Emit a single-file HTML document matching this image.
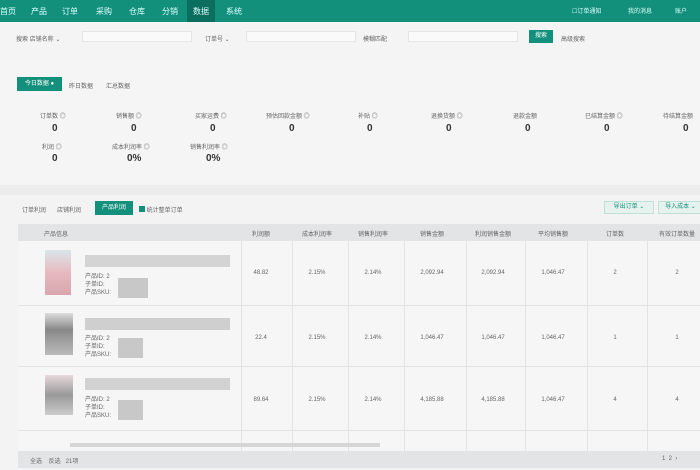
<!DOCTYPE html><html><head><meta charset="utf-8"><style>
*{margin:0;padding:0;box-sizing:border-box}
body{width:700px;height:470px;overflow:hidden;background:#ececec;font-family:"Liberation Sans","Noto Sans CJK SC",sans-serif;font-size:7px;color:#555;position:relative}
.a{position:absolute}
.nav{left:0;top:0;width:700px;height:22px;background:#13907c}
.nav span{position:absolute;top:6px;color:#dff;font-size:8px}
.t{color:#666;font-size:6px}
.v{font-size:10px;color:#333;font-weight:bold}
.cl{position:absolute;top:224px;width:1px;height:228px;background:#e3e3e3}
.cell{position:absolute;font-size:6px;color:#666;width:50px;text-align:center}
.blk{position:absolute;background:#bbb}
</style></head><body>
<div class="a nav"></div>
<div class="a" style="left:187px;top:0;width:28px;height:22px;background:#0c6e5e"></div>
<div class="a nav" style="background:none">
<span style="left:0">首页</span><span style="left:31px">产品</span><span style="left:62px">订单</span><span style="left:96px">采购</span><span style="left:129px">仓库</span><span style="left:162px">分销</span><span style="left:193px">数据</span><span style="left:226px">系统</span>
<span style="left:572px;font-size:6px">☐订单通知</span><span style="left:628px;font-size:6px">我的消息</span><span style="left:675px;font-size:6px">账户</span></div>
<div class="a" style="left:0;top:22px;width:700px;height:40px;background:#f4f4f4"></div>
<div class="a t" style="left:16px;top:34px">搜索 店铺名称 ⌄</div>
<div class="a" style="left:82px;top:31px;width:110px;height:11px;background:#fafafa;border:1px solid #e6e6e6"></div>
<div class="a t" style="left:205px;top:34px">订单号 ⌄</div>
<div class="a" style="left:246px;top:31px;width:110px;height:11px;background:#fafafa;border:1px solid #e6e6e6"></div>
<div class="a t" style="left:363px;top:34px">模糊匹配</div>
<div class="a" style="left:408px;top:31px;width:110px;height:11px;background:#fafafa;border:1px solid #e6e6e6"></div>
<div class="a" style="left:529px;top:30px;width:24px;height:13px;background:#13907c;color:#fff;font-size:6px;text-align:center;line-height:13px">搜索</div>
<div class="a t" style="left:561px;top:34px">高级搜索</div>
<div class="a" style="left:0;top:62px;width:700px;height:123px;background:#f5f5f5"></div>
<div class="a" style="left:17px;top:77px;width:45px;height:14px;background:#13907c;color:#fff;font-size:6px;line-height:14px;text-align:center">今日数据 ●</div>
<div class="a t" style="left:69px;top:81px">昨日数据</div><div class="a t" style="left:106px;top:81px">汇总数据</div>
<div class="a t" style="left:40px;top:111px">订单数 ◎</div><div class="a v" style="left:52px;top:123px">0</div>
<div class="a t" style="left:116px;top:111px">销售额 ◎</div><div class="a v" style="left:131px;top:123px">0</div>
<div class="a t" style="left:195px;top:111px">买家运费 ◎</div><div class="a v" style="left:210px;top:123px">0</div>
<div class="a t" style="left:266px;top:111px">预估回款金额 ◎</div><div class="a v" style="left:289px;top:123px">0</div>
<div class="a t" style="left:358px;top:111px">补贴 ◎</div><div class="a v" style="left:367px;top:123px">0</div>
<div class="a t" style="left:431px;top:111px">退换货额 ◎</div><div class="a v" style="left:446px;top:123px">0</div>
<div class="a t" style="left:513px;top:111px">退款金额</div><div class="a v" style="left:525px;top:123px">0</div>
<div class="a t" style="left:585px;top:111px">已结算金额 ◎</div><div class="a v" style="left:604px;top:123px">0</div>
<div class="a t" style="left:663px;top:111px">待结算金额</div><div class="a v" style="left:683px;top:123px">0</div>
<div class="a t" style="left:42px;top:142px">利润 ◎</div><div class="a v" style="left:52px;top:153px">0</div>
<div class="a t" style="left:112px;top:142px">成本利润率 ◎</div><div class="a v" style="left:127px;top:153px">0%</div>
<div class="a t" style="left:190px;top:142px">销售利润率 ◎</div><div class="a v" style="left:206px;top:153px">0%</div>
<div class="a" style="left:0;top:195px;width:700px;height:275px;background:#f3f3f3"></div>
<div class="a t" style="left:22px;top:205px">订单利润</div><div class="a t" style="left:57px;top:205px">店铺利润</div>
<div class="a" style="left:95px;top:201px;width:38px;height:14px;background:#13907c;color:#fff;font-size:6px;line-height:14px;text-align:center">产品利润</div>
<div class="a t" style="left:139px;top:205px"><span style="display:inline-block;width:6px;height:6px;background:#13907c"></span> 统计整单订单</div>
<div class="a" style="left:604px;top:201px;width:50px;height:13px;border:1px solid #bfe0d6;background:#e6f2ee;color:#13907c;font-size:6px;line-height:11px;text-align:center">导出订单 ⌄</div>
<div class="a" style="left:658px;top:201px;width:45px;height:13px;border:1px solid #bfe0d6;background:#e6f2ee;color:#13907c;font-size:6px;line-height:11px;text-align:center">导入成本 ⌄</div>
<div class="a" style="left:18px;top:224px;width:682px;height:17px;background:#e2e4e6"></div>
<div class="a t" style="left:44px;top:229px">产品信息</div>
<div class="cell" style="left:236px;top:229px">利润额</div><div class="cell" style="left:292px;top:229px">成本利润率</div><div class="cell" style="left:348px;top:229px">销售利润率</div><div class="cell" style="left:407px;top:229px">销售金额</div><div class="cell" style="left:468px;top:229px">利润销售金额</div><div class="cell" style="left:528px;top:229px">平均销售额</div><div class="cell" style="left:590px;top:229px">订单数</div><div class="cell" style="left:652px;top:229px">有效订单数量</div>
<div class="a" style="left:18px;top:241px;width:682px;height:211px;background:#f6f6f6"></div>
<div class="cl" style="left:241px"></div><div class="cl" style="left:292px"></div><div class="cl" style="left:348px"></div><div class="cl" style="left:404px"></div><div class="cl" style="left:466px"></div><div class="cl" style="left:525px"></div><div class="cl" style="left:587px"></div><div class="cl" style="left:647px"></div>
<div class="a" style="left:18px;top:305px;width:682px;height:1px;background:#e3e3e3"></div>
<div class="a" style="left:18px;top:366px;width:682px;height:1px;background:#e3e3e3"></div>
<div class="a" style="left:18px;top:430px;width:682px;height:1px;background:#e3e3e3"></div>
<div class="blk" style="left:45px;top:250px;width:26px;height:45px;background:linear-gradient(#d9e6ea,#e7b9bf 50%,#d9a6ae)"></div>
<div class="blk" style="left:45px;top:313px;width:28px;height:42px;background:linear-gradient(#ddd,#888 40%,#bbb)"></div>
<div class="blk" style="left:45px;top:375px;width:28px;height:40px;background:linear-gradient(#e8d8dc,#999 50%,#ccc)"></div>
<div class="blk" style="left:85px;top:255px;width:145px;height:12px;background:#d4d4d4"></div>
<div class="blk" style="left:85px;top:318px;width:145px;height:12px;background:#cfcfcf"></div>
<div class="blk" style="left:85px;top:378px;width:145px;height:12px;background:#d2d2d2"></div>
<div class="a t" style="left:85px;top:273px;line-height:8px">产品ID: 2<br>子单ID:<br>产品SKU:</div>
<div class="a t" style="left:85px;top:335px;line-height:8px">产品ID: 2<br>子单ID:<br>产品SKU:</div>
<div class="a t" style="left:85px;top:396px;line-height:8px">产品ID: 2<br>子单ID:<br>产品SKU:</div>
<div class="blk" style="left:118px;top:278px;width:30px;height:20px;background:#c8c8c8"></div>
<div class="blk" style="left:118px;top:338px;width:25px;height:20px;background:#c8c8c8"></div>
<div class="blk" style="left:118px;top:400px;width:25px;height:20px;background:#c8c8c8"></div>
<div class="cell" style="left:236px;top:270px">48.82</div><div class="cell" style="left:292px;top:270px">2.15%</div><div class="cell" style="left:348px;top:270px">2.14%</div><div class="cell" style="left:407px;top:270px">2,092.94</div><div class="cell" style="left:468px;top:270px">2,092.94</div><div class="cell" style="left:528px;top:270px">1,046.47</div><div class="cell" style="left:590px;top:270px">2</div><div class="cell" style="left:652px;top:270px">2</div>
<div class="cell" style="left:236px;top:335px">22.4</div><div class="cell" style="left:292px;top:335px">2.15%</div><div class="cell" style="left:348px;top:335px">2.14%</div><div class="cell" style="left:407px;top:335px">1,046.47</div><div class="cell" style="left:468px;top:335px">1,046.47</div><div class="cell" style="left:528px;top:335px">1,046.47</div><div class="cell" style="left:590px;top:335px">1</div><div class="cell" style="left:652px;top:335px">1</div>
<div class="cell" style="left:236px;top:397px">89.64</div><div class="cell" style="left:292px;top:397px">2.15%</div><div class="cell" style="left:348px;top:397px">2.14%</div><div class="cell" style="left:407px;top:397px">4,185.88</div><div class="cell" style="left:468px;top:397px">4,185.88</div><div class="cell" style="left:528px;top:397px">1,046.47</div><div class="cell" style="left:590px;top:397px">4</div><div class="cell" style="left:652px;top:397px">4</div>
<div class="a" style="left:70px;top:443px;width:310px;height:4px;background:#d6d6d6"></div>
<div class="a" style="left:18px;top:451px;width:682px;height:17px;background:#e2e4e6"></div>
<div class="a t" style="left:30px;top:456px">全选 &nbsp;&nbsp; 反选 &nbsp; 21项</div>
<div class="a t" style="left:662px;top:456px">1 &nbsp;2 &nbsp;›</div>
</body></html>
